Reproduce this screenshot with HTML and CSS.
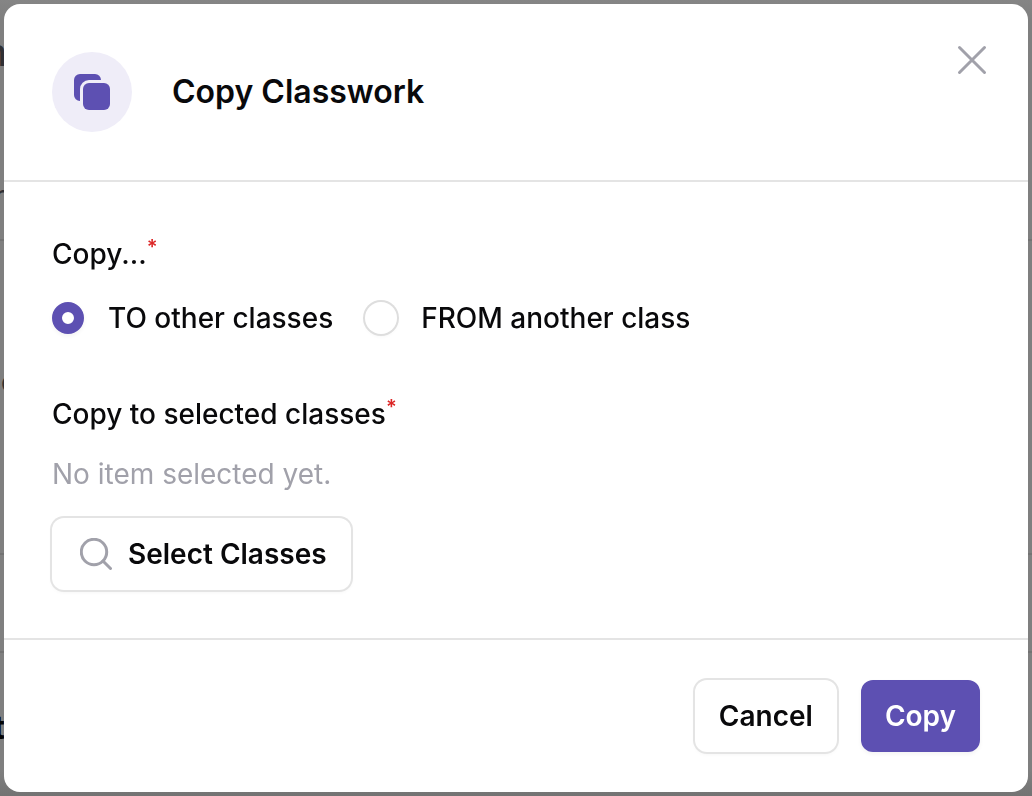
FILE: index.html
```html
<!DOCTYPE html>
<html lang="en">
<head>
<meta charset="utf-8">
<meta name="viewport" content="width=device-width, initial-scale=1">
<title>Copy Classwork</title>
<link rel="stylesheet" href="styles.css">
</head>
<body>
<div class="page" aria-hidden="true">
  <span class="page-text page-text-title">m</span>
  <span class="page-text page-text-meta">r</span>
  <span class="page-text page-text-item">c</span>
  <span class="page-text page-text-strong">t</span>
  <div class="page-line page-line-first"></div>
  <div class="page-line page-line-second"></div>
  <div class="page-line page-line-third"></div>
</div>
<form class="dialog" role="dialog" aria-labelledby="dialog-title">
  <header class="dialog-header">
    <span class="badge">
      <svg class="badge-icon" viewBox="0 0 36 36" aria-hidden="true">
        <path d="M6 27A6 6 0 0 1 0 21V6A6 6 0 0 1 6 0H21A6 6 0 0 1 27 6H15A9 9 0 0 0 6 15Z"/>
        <rect x="9" y="9" width="27" height="27" rx="6"/>
      </svg>
    </span>
    <h1 class="dialog-title" id="dialog-title">Copy Classwork</h1>
    <button class="close" type="button" aria-label="Close">
      <svg class="close-icon" viewBox="0 0 32 32" aria-hidden="true"><path d="M3.500 3.500L28.500 28.500M28.500 3.500L3.500 28.500"/></svg>
    </button>
  </header>
  <div class="dialog-body">
    <fieldset class="field">
      <legend class="label">Copy...<sup class="required">*</sup></legend>
      <div class="choices">
        <label class="choice"><input class="radio" type="radio" name="direction" checked><span>TO other classes</span></label>
        <label class="choice"><input class="radio" type="radio" name="direction"><span>FROM another class</span></label>
      </div>
    </fieldset>
    <div class="field">
      <div class="label">Copy to selected classes<sup class="required">*</sup></div>
      <p class="empty">No item selected yet.</p>
      <button class="button button-select" type="button">
        <svg class="search-icon" viewBox="0 0 32 32" aria-hidden="true"><circle cx="14" cy="14" r="12.700"/><path d="M23 23L30.500 30.500"/></svg>
        Select Classes
      </button>
    </div>
  </div>
  <footer class="dialog-footer">
    <button class="button" type="button">Cancel</button>
    <button class="button button-primary" type="submit">Copy</button>
  </footer>
</form>
</body>
</html>
```
FILE: styles.css
```css
* {
  box-sizing: border-box;
}

body {
  margin: 0;
  min-height: 100vh;
  padding: 4px;
  display: flex;
  background: #808080;
  color: #09090b;
  font: 500 28px/40px Inter, "Liberation Sans", sans-serif;
}

.page {
  position: fixed;
  inset: 0;
  overflow: hidden;
  background: linear-gradient(#858585, #7f7f7f 20px, #7f7f7f 770px, #737373);
}

.page-text {
  position: absolute;
  color: #303033;
}

.page-text-title {
  top: 32px;
  right: calc(100% - 7px);
  font-size: 38px;
}

.page-text-meta {
  top: 176px;
  right: calc(100% - 5px);
  font-weight: 400;
}

.page-text-item {
  top: 362px;
  left: 1px;
}

.page-text-strong {
  top: 708px;
  right: calc(100% - 5px);
  color: #050505;
  font-size: 32px;
  font-weight: 700;
}

.page-line {
  position: absolute;
  left: 0;
  right: 0;
  height: 2px;
  background: #737373;
}

.page-line-first {
  top: 239px;
}

.page-line-second {
  top: 553px;
}

.page-line-third {
  top: 651px;
}

.dialog {
  position: relative;
  flex: 1;
  display: flex;
  flex-direction: column;
  border-radius: 16px;
  background: #fff;
}

.dialog-header {
  display: flex;
  align-items: center;
  gap: 40px;
  padding: 48px;
  border-bottom: 2px solid #e4e4e4;
}

.badge {
  display: flex;
  align-items: center;
  justify-content: center;
  width: 80px;
  height: 80px;
  border-radius: 50%;
  background: #efedf8;
}

.badge-icon {
  width: 36px;
  height: 36px;
  fill: #5d50b2;
}

.dialog-title {
  margin: 0;
  font-size: 32px;
  font-weight: 600;
}

.close {
  display: flex;
  align-self: flex-start;
  margin: -8px -8px 0 auto;
  padding: 0;
  border: 0;
  background: none;
}

.close-icon {
  width: 32px;
  height: 32px;
  fill: none;
  stroke: #a1a1aa;
  stroke-width: 3;
  stroke-linecap: round;
}

.dialog-body {
  flex: 1;
  display: flex;
  flex-direction: column;
  gap: 56px;
  padding: 52px 48px 46px;
}

.field {
  min-width: 0;
  margin: 0;
  padding: 0;
  border: 0;
}

.label {
  padding: 0;
}

.required {
  color: #dc2626;
  font-size: 20px;
  font-weight: 600;
  line-height: 0;
}

.choices {
  display: flex;
  flex-wrap: wrap;
  gap: 32px;
  margin-top: 24px;
}

.choice {
  display: flex;
  align-items: center;
  gap: 24px;
}

.radio {
  appearance: none;
  width: 32px;
  height: 32px;
  margin: 0;
  border-radius: 50%;
  background: #fff;
  box-shadow: 0 0 0 2px #dedede, 0 2px 4px rgba(0, 0, 0, 0.05);
}

.radio:checked {
  border: 10px solid #5d50b2;
  box-shadow: 0 2px 4px rgba(0, 0, 0, 0.05);
}

.empty {
  margin: 20px 0;
  color: #a1a1aa;
  font-weight: 400;
}

.button {
  display: flex;
  align-items: center;
  padding: 16px 24px;
  border: 0;
  border-radius: 12px;
  background: #fff;
  box-shadow: 0 0 0 2px #e4e4e4, 0 2px 4px rgba(0, 0, 0, 0.05);
  color: inherit;
  font: inherit;
  font-weight: 600;
}

.button-select {
  gap: 16px;
  margin-top: 24px;
  padding-left: 28px;
}

.search-icon {
  width: 32px;
  height: 32px;
  fill: none;
  stroke: #a1a1aa;
  stroke-width: 3;
  stroke-linecap: round;
}

.button-primary {
  background: #5d50b2;
  box-shadow: 0 2px 4px rgba(0, 0, 0, 0.05);
  color: #fff;
}

.dialog-footer {
  display: flex;
  justify-content: flex-end;
  gap: 24px;
  padding: 40px 48px;
  border-top: 2px solid #e4e4e4;
}
```
